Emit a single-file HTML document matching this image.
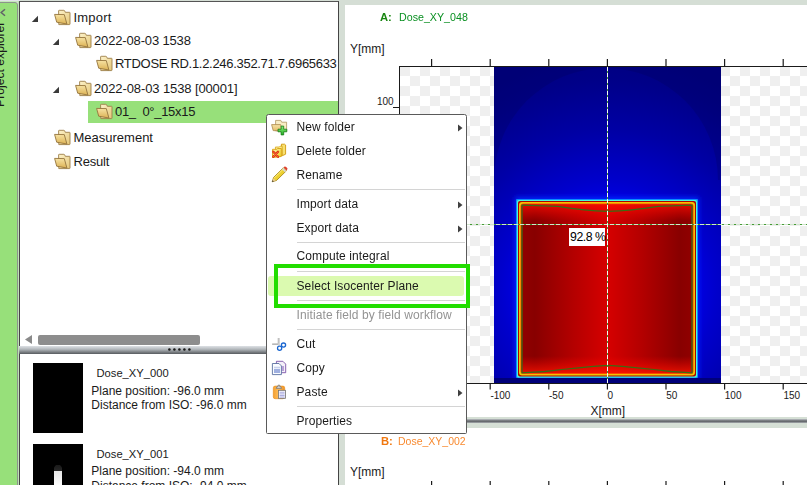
<!DOCTYPE html><html><head><meta charset="utf-8"><style>
*{margin:0;padding:0;box-sizing:border-box}
html,body{width:807px;height:485px;overflow:hidden;background:#d5ded5;font-family:"Liberation Sans", sans-serif}
.a{position:absolute}
.t{position:absolute;white-space:pre;font-family:"Liberation Sans", sans-serif}
.ic{position:absolute;overflow:visible}
</style></head><body>

<div class="a" style="left:0;top:0;width:20px;height:485px;background:#d5ded5"></div>
<div class="a" style="left:0;top:0;width:20px;height:1px;background:#e2e4ea"></div>
<div class="a" style="left:18px;top:1px;width:1px;height:484px;background:#bfe2b6"></div>
<div class="a" style="left:0;top:1px;width:18px;height:1px;background:#c6e6bd"></div>
<div class="a" style="left:-3px;top:2px;width:21px;height:490px;background:#97e07a;border:1px solid #8c948c;border-radius:3px"></div>
<svg class="ic" style="left:0px;top:8px" width="8" height="10" viewBox="0 0 8 10"><path d="M5,1.2 L1.2,4.5 L5,7.8" fill="none" stroke="#606068" stroke-width="1.5"/></svg>
<div class="t" style="left:0px;top:107.3px;font-size:12.2px;line-height:12.2px;color:#1a1a1a;transform-origin:0 0;transform:rotate(-90deg) translate(0,-5.75px)">Project explorer</div>
<div class="a" style="left:19px;top:1px;width:320px;height:346px;background:#fff;border-left:1px solid #444;border-top:1px solid #555;border-right:1px solid #444"></div>
<div class="a" style="left:88px;top:101px;width:250px;height:22px;background:#97e07a"></div>
<svg class="ic" style="left:31px;top:15px" width="8" height="8" viewBox="0 0 8 8"><path d="M7,0.8 L7,7 L0.8,7 z" fill="#3a3a3a"/></svg>

<svg class="ic" style="left:54px;top:10px" width="17" height="15" viewBox="0 0 17 15">
<defs><linearGradient id="fg54_10" x1="0" y1="0" x2="0" y2="1"><stop offset="0" stop-color="#f7e3a4"/><stop offset="1" stop-color="#dcb254"/></linearGradient>
<linearGradient id="fb54_10" x1="0" y1="0" x2="1" y2="1"><stop offset="0" stop-color="#fdf3cc"/><stop offset="1" stop-color="#e4c676"/></linearGradient></defs>
<path d="M4.6,0.7 Q4.6,0.3 5.2,0.3 h4.6 q0.6,0 0.9,0.6 l0.6,1.4 h4.2 q0.5,0 0.5,0.5 v11.2 q0,0.6 -0.6,0.6 h-10.6 z" fill="url(#fb54_10)" stroke="#9c7e48" stroke-width="0.9"/>
<path d="M0.6,4.4 L10.3,4.6 L12.9,14 L2.7,12.2 z" fill="url(#fg54_10)" stroke="#94743c" stroke-width="0.9"/>
</svg>

<div class="t" style="left:73.5px;top:11.00px;font-size:13px;line-height:13px;color:#1a1a1a;letter-spacing:0.20px;clip-path:inset(-10px 0 -10px -10px);width:264.5px">Import</div>

<svg class="ic" style="left:52px;top:38px" width="8" height="8" viewBox="0 0 8 8"><path d="M7,0.8 L7,7 L0.8,7 z" fill="#3a3a3a"/></svg>

<svg class="ic" style="left:75px;top:33px" width="17" height="15" viewBox="0 0 17 15">
<defs><linearGradient id="fg75_33" x1="0" y1="0" x2="0" y2="1"><stop offset="0" stop-color="#f7e3a4"/><stop offset="1" stop-color="#dcb254"/></linearGradient>
<linearGradient id="fb75_33" x1="0" y1="0" x2="1" y2="1"><stop offset="0" stop-color="#fdf3cc"/><stop offset="1" stop-color="#e4c676"/></linearGradient></defs>
<path d="M4.6,0.7 Q4.6,0.3 5.2,0.3 h4.6 q0.6,0 0.9,0.6 l0.6,1.4 h4.2 q0.5,0 0.5,0.5 v11.2 q0,0.6 -0.6,0.6 h-10.6 z" fill="url(#fb75_33)" stroke="#9c7e48" stroke-width="0.9"/>
<path d="M0.6,4.4 L10.3,4.6 L12.9,14 L2.7,12.2 z" fill="url(#fg75_33)" stroke="#94743c" stroke-width="0.9"/>
</svg>

<div class="t" style="left:94px;top:34.00px;font-size:13px;line-height:13px;color:#1a1a1a;letter-spacing:-0.15px;clip-path:inset(-10px 0 -10px -10px);width:244.0px">2022-08-03 1538</div>

<svg class="ic" style="left:96px;top:56px" width="17" height="15" viewBox="0 0 17 15">
<defs><linearGradient id="fg96_56" x1="0" y1="0" x2="0" y2="1"><stop offset="0" stop-color="#f7e3a4"/><stop offset="1" stop-color="#dcb254"/></linearGradient>
<linearGradient id="fb96_56" x1="0" y1="0" x2="1" y2="1"><stop offset="0" stop-color="#fdf3cc"/><stop offset="1" stop-color="#e4c676"/></linearGradient></defs>
<path d="M4.6,0.7 Q4.6,0.3 5.2,0.3 h4.6 q0.6,0 0.9,0.6 l0.6,1.4 h4.2 q0.5,0 0.5,0.5 v11.2 q0,0.6 -0.6,0.6 h-10.6 z" fill="url(#fb96_56)" stroke="#9c7e48" stroke-width="0.9"/>
<path d="M0.6,4.4 L10.3,4.6 L12.9,14 L2.7,12.2 z" fill="url(#fg96_56)" stroke="#94743c" stroke-width="0.9"/>
</svg>

<div class="t" style="left:115px;top:57.00px;font-size:13px;line-height:13px;color:#1a1a1a;letter-spacing:-0.30px;clip-path:inset(-10px 0 -10px -10px);width:223.0px">RTDOSE RD.1.2.246.352.71.7.6965633</div>

<svg class="ic" style="left:52px;top:86px" width="8" height="8" viewBox="0 0 8 8"><path d="M7,0.8 L7,7 L0.8,7 z" fill="#3a3a3a"/></svg>

<svg class="ic" style="left:75px;top:81px" width="17" height="15" viewBox="0 0 17 15">
<defs><linearGradient id="fg75_81" x1="0" y1="0" x2="0" y2="1"><stop offset="0" stop-color="#f7e3a4"/><stop offset="1" stop-color="#dcb254"/></linearGradient>
<linearGradient id="fb75_81" x1="0" y1="0" x2="1" y2="1"><stop offset="0" stop-color="#fdf3cc"/><stop offset="1" stop-color="#e4c676"/></linearGradient></defs>
<path d="M4.6,0.7 Q4.6,0.3 5.2,0.3 h4.6 q0.6,0 0.9,0.6 l0.6,1.4 h4.2 q0.5,0 0.5,0.5 v11.2 q0,0.6 -0.6,0.6 h-10.6 z" fill="url(#fb75_81)" stroke="#9c7e48" stroke-width="0.9"/>
<path d="M0.6,4.4 L10.3,4.6 L12.9,14 L2.7,12.2 z" fill="url(#fg75_81)" stroke="#94743c" stroke-width="0.9"/>
</svg>

<div class="t" style="left:94px;top:82.00px;font-size:13px;line-height:13px;color:#1a1a1a;letter-spacing:-0.11px;clip-path:inset(-10px 0 -10px -10px);width:244.0px">2022-08-03 1538 [00001]</div>

<svg class="ic" style="left:96px;top:104px" width="17" height="15" viewBox="0 0 17 15">
<defs><linearGradient id="fg96_104" x1="0" y1="0" x2="0" y2="1"><stop offset="0" stop-color="#f7e3a4"/><stop offset="1" stop-color="#dcb254"/></linearGradient>
<linearGradient id="fb96_104" x1="0" y1="0" x2="1" y2="1"><stop offset="0" stop-color="#fdf3cc"/><stop offset="1" stop-color="#e4c676"/></linearGradient></defs>
<path d="M4.6,0.7 Q4.6,0.3 5.2,0.3 h4.6 q0.6,0 0.9,0.6 l0.6,1.4 h4.2 q0.5,0 0.5,0.5 v11.2 q0,0.6 -0.6,0.6 h-10.6 z" fill="url(#fb96_104)" stroke="#9c7e48" stroke-width="0.9"/>
<path d="M0.6,4.4 L10.3,4.6 L12.9,14 L2.7,12.2 z" fill="url(#fg96_104)" stroke="#94743c" stroke-width="0.9"/>
</svg>

<div class="t" style="left:115px;top:105.00px;font-size:13px;line-height:13px;color:#1a1a1a;letter-spacing:-0.30px;clip-path:inset(-10px 0 -10px -10px);width:223.0px">01_  0°_15x15</div>

<svg class="ic" style="left:54px;top:130px" width="17" height="15" viewBox="0 0 17 15">
<defs><linearGradient id="fg54_130" x1="0" y1="0" x2="0" y2="1"><stop offset="0" stop-color="#f7e3a4"/><stop offset="1" stop-color="#dcb254"/></linearGradient>
<linearGradient id="fb54_130" x1="0" y1="0" x2="1" y2="1"><stop offset="0" stop-color="#fdf3cc"/><stop offset="1" stop-color="#e4c676"/></linearGradient></defs>
<path d="M4.6,0.7 Q4.6,0.3 5.2,0.3 h4.6 q0.6,0 0.9,0.6 l0.6,1.4 h4.2 q0.5,0 0.5,0.5 v11.2 q0,0.6 -0.6,0.6 h-10.6 z" fill="url(#fb54_130)" stroke="#9c7e48" stroke-width="0.9"/>
<path d="M0.6,4.4 L10.3,4.6 L12.9,14 L2.7,12.2 z" fill="url(#fg54_130)" stroke="#94743c" stroke-width="0.9"/>
</svg>

<div class="t" style="left:73.5px;top:131.00px;font-size:13px;line-height:13px;color:#1a1a1a;letter-spacing:0.00px;clip-path:inset(-10px 0 -10px -10px);width:264.5px">Measurement</div>

<svg class="ic" style="left:54px;top:154px" width="17" height="15" viewBox="0 0 17 15">
<defs><linearGradient id="fg54_154" x1="0" y1="0" x2="0" y2="1"><stop offset="0" stop-color="#f7e3a4"/><stop offset="1" stop-color="#dcb254"/></linearGradient>
<linearGradient id="fb54_154" x1="0" y1="0" x2="1" y2="1"><stop offset="0" stop-color="#fdf3cc"/><stop offset="1" stop-color="#e4c676"/></linearGradient></defs>
<path d="M4.6,0.7 Q4.6,0.3 5.2,0.3 h4.6 q0.6,0 0.9,0.6 l0.6,1.4 h4.2 q0.5,0 0.5,0.5 v11.2 q0,0.6 -0.6,0.6 h-10.6 z" fill="url(#fb54_154)" stroke="#9c7e48" stroke-width="0.9"/>
<path d="M0.6,4.4 L10.3,4.6 L12.9,14 L2.7,12.2 z" fill="url(#fg54_154)" stroke="#94743c" stroke-width="0.9"/>
</svg>

<div class="t" style="left:73.5px;top:155.00px;font-size:13px;line-height:13px;color:#1a1a1a;letter-spacing:-0.20px;clip-path:inset(-10px 0 -10px -10px);width:264.5px">Result</div>

<svg class="ic" style="left:25px;top:335px" width="8" height="9" viewBox="0 0 8 9"><path d="M7,0 L7,9 L0,4.5 z" fill="#8a8a8a"/></svg>
<div class="a" style="left:38px;top:335px;width:162px;height:10px;background:#8d8d8d;border-radius:2px"></div>
<div class="a" style="left:19px;top:346px;width:320px;height:8px;background:linear-gradient(#dde1e5,#b4b9bd 40%,#565a5e)"></div>
<svg class="ic" style="left:0;top:0" width="807" height="485"><circle cx="169.4" cy="349.5" r="1.25" fill="#1a1a1a"/><circle cx="174.4" cy="349.5" r="1.25" fill="#1a1a1a"/><circle cx="179.4" cy="349.5" r="1.25" fill="#1a1a1a"/><circle cx="184.4" cy="349.5" r="1.25" fill="#1a1a1a"/><circle cx="189.4" cy="349.5" r="1.25" fill="#1a1a1a"/></svg>
<div class="a" style="left:19px;top:354px;width:320px;height:131px;background:#fff;border-left:1px solid #444;border-right:1px solid #444"></div>
<div class="a" style="left:33px;top:363px;width:50px;height:70px;background:#000"></div>
<div class="a" style="left:33px;top:444px;width:50px;height:41px;background:#000"></div>
<div class="a" style="left:54px;top:465px;width:8px;height:20px;background:linear-gradient(#1a1a1a,#262626 5.5px,#e6e6e6 6px,#fcfcfc);clip-path:polygon(2px 0,6px 0,8px 2.5px,8px 100%,0 100%,0 2.5px)"></div>
<div class="t" style="left:96.5px;top:367.52px;font-size:11.2px;line-height:11.2px;color:#1a1a1a;">Dose_XY_000</div>

<div class="t" style="left:91.3px;top:384.84px;font-size:12px;line-height:12px;color:#1a1a1a;">Plane position: -96.0 mm</div>

<div class="t" style="left:91.3px;top:399.14px;font-size:12px;line-height:12px;color:#1a1a1a;">Distance from ISO: -96.0 mm</div>

<div class="t" style="left:96.5px;top:448.52px;font-size:11.2px;line-height:11.2px;color:#1a1a1a;">Dose_XY_001</div>

<div class="t" style="left:91.3px;top:465.34px;font-size:12px;line-height:12px;color:#1a1a1a;">Plane position: -94.0 mm</div>

<div class="t" style="left:91.3px;top:479.64px;font-size:12px;line-height:12px;color:#1a1a1a;">Distance from ISO: -94.0 mm</div>

<div class="a" style="left:345px;top:5px;width:462px;height:412px;background:#fff"></div>
<div class="a" style="left:345px;top:417px;width:462px;height:11px;background:#d5dfd5"></div>
<div class="a" style="left:345px;top:419px;width:462px;height:4px;background:linear-gradient(#c0c4c8,#5a5e62 55%,#a8acb0)"></div>
<div class="a" style="left:345px;top:428px;width:462px;height:57px;background:#fff"></div>
<div class="t" style="left:380px;top:12.01px;font-size:11.8px;line-height:11.8px;color:#1a8612;transform:scaleX(0.95);transform-origin:0 0"><b>A:</b></div>

<div class="t" style="left:398.8px;top:12.01px;font-size:11.8px;line-height:11.8px;color:#0a9022;transform:scaleX(0.905);transform-origin:0 0">Dose_XY_048</div>

<div class="t" style="left:350px;top:43.04px;font-size:12px;line-height:12px;color:#1a1a1a;">Y[mm]</div>

<div class="t" style="left:377px;top:96.53px;font-size:10px;line-height:10px;color:#1a1a1a;">100</div>

<div class="t" style="left:380.6px;top:435.51px;font-size:11.8px;line-height:11.8px;color:#f07810;transform:scaleX(0.95);transform-origin:0 0"><b>B:</b></div>

<div class="t" style="left:397.8px;top:435.51px;font-size:11.8px;line-height:11.8px;color:#f88a30;transform:scaleX(0.89);transform-origin:0 0">Dose_XY_002</div>

<div class="t" style="left:350px;top:466.24px;font-size:12px;line-height:12px;color:#1a1a1a;">Y[mm]</div>

<svg class="a" style="left:0;top:0" width="807" height="485" viewBox="0 0 807 485">
<defs>
<pattern id="chk" x="400" y="66" width="20" height="20" patternUnits="userSpaceOnUse">
<rect width="20" height="20" fill="#fff"/><rect width="10" height="10" fill="#efefef"/><rect x="10" y="10" width="10" height="10" fill="#efefef"/></pattern>
<radialGradient id="bl" cx="608" cy="289" r="235" gradientUnits="userSpaceOnUse">
<stop offset="0" stop-color="#0000f0"/><stop offset="0.38" stop-color="#0000e0"/><stop offset="0.46" stop-color="#0000cc"/><stop offset="0.68" stop-color="#0000a4"/><stop offset="0.89" stop-color="#000088"/><stop offset="1" stop-color="#000080"/></radialGradient>
<linearGradient id="rv" x1="0" y1="204" x2="0" y2="373" gradientUnits="userSpaceOnUse">
<stop offset="0" stop-color="#ff1000" stop-opacity="0.75"/><stop offset="0.1" stop-color="#ff0000" stop-opacity="0"/><stop offset="0.9" stop-color="#ff0000" stop-opacity="0"/><stop offset="1" stop-color="#ff1800" stop-opacity="0.75"/></linearGradient>
<linearGradient id="rd" x1="523" y1="0" x2="692" y2="0" gradientUnits="userSpaceOnUse">
<stop offset="0" stop-color="#900000"/><stop offset="0.07" stop-color="#880000"/><stop offset="0.3" stop-color="#b40000"/><stop offset="0.5" stop-color="#d60000"/><stop offset="0.7" stop-color="#b40000"/><stop offset="0.93" stop-color="#880000"/><stop offset="1" stop-color="#900000"/></linearGradient>
</defs>
<rect x="400" y="66" width="407" height="317" fill="url(#chk)"/>
<rect x="494" y="66" width="227" height="317" fill="url(#bl)"/>
<clipPath id="bc"><rect x="494" y="66" width="227" height="114"/></clipPath>
<path d="M494,66 H721 V180 H494 z M494,180 A112,112 0 0 1 718,180 z" fill="#000050" fill-opacity="0.22" fill-rule="evenodd" clip-path="url(#bc)"/>
<rect x="494" y="378" width="227" height="5" fill="#00007a"/>
<filter id="gf" x="-20%" y="-20%" width="140%" height="140%"><feGaussianBlur stdDeviation="2.5"/></filter>
<clipPath id="bcl"><rect x="494" y="66" width="227" height="312"/></clipPath>
<g clip-path="url(#bcl)"><rect x="515" y="197" width="184" height="182" rx="1" fill="#0028ff" fill-opacity="0.85" filter="url(#gf)"/></g>
<rect x="516" y="199" width="182" height="179" rx="1" fill="#0a8cff"/>
<rect x="517" y="200" width="180" height="177.5" rx="1.5" fill="#48f8d8"/>
<rect x="518" y="201" width="178" height="175.5" rx="2" fill="#b00000"/>
<rect x="519" y="202" width="176" height="173.5" rx="3" fill="#f0c400"/>
<rect x="520.5" y="203.5" width="173" height="170.5" rx="3" fill="#ff4800"/>
<rect x="521.5" y="204.5" width="171" height="168.5" rx="2" fill="url(#rd)"/>
<rect x="521.5" y="204.5" width="171" height="168.5" rx="2" fill="url(#rv)"/>
<path d="M522,205.2 L558,206.3 Q585,210.8 608,211.3 Q631,210.8 658,206.3 L692,205.2 V372.8 L671,371.5 Q636,367 608,365.3 Q580,367 545,371.5 L522,372.8 z" fill="none" stroke="#3a6c12" stroke-width="1.3"/>
<path d="M400,383.5 H807 M399.5,66 V383.5 M400,66.5 H807" stroke="#1a1a1a" stroke-width="1" fill="none"/>
<path d="M431.6,59 V66 M431.6,383 V389.5" stroke="#1a1a1a" stroke-width="1.2"/>
<path d="M490.2,59 V66 M490.2,383 V389.5" stroke="#1a1a1a" stroke-width="1.2"/>
<path d="M548.8,59 V66 M548.8,383 V389.5" stroke="#1a1a1a" stroke-width="1.2"/>
<path d="M607.4,59 V66 M607.4,383 V389.5" stroke="#1a1a1a" stroke-width="1.2"/>
<path d="M666.0,59 V66 M666.0,383 V389.5" stroke="#1a1a1a" stroke-width="1.2"/>
<path d="M724.6,59 V66 M724.6,383 V389.5" stroke="#1a1a1a" stroke-width="1.2"/>
<path d="M783.2,59 V66 M783.2,383 V389.5" stroke="#1a1a1a" stroke-width="1.2"/>
<path d="M393,107.5 H400" stroke="#1a1a1a" stroke-width="1"/>
<path d="M607.5,67 V383 M400,224.5 H807" stroke="#459a35" stroke-width="1"/>
<path d="M607.5,67 V383" stroke="#ffffff" stroke-width="1" stroke-dasharray="4,2" stroke-opacity="0.95"/>
<path d="M400,224.5 H807" stroke="#ffffff" stroke-width="1" stroke-dasharray="4,2" stroke-opacity="0.75"/>
<path d="M431.6,481 V488" stroke="#1a1a1a" stroke-width="1.2"/>
<path d="M490.2,481 V488" stroke="#1a1a1a" stroke-width="1.2"/>
<path d="M548.8,481 V488" stroke="#1a1a1a" stroke-width="1.2"/>
<path d="M607.4,481 V488" stroke="#1a1a1a" stroke-width="1.2"/>
<path d="M666.0,481 V488" stroke="#1a1a1a" stroke-width="1.2"/>
<path d="M724.6,481 V488" stroke="#1a1a1a" stroke-width="1.2"/>
<path d="M783.2,481 V488" stroke="#1a1a1a" stroke-width="1.2"/>
</svg>
<div class="t" style="left:490.4px;top:390.74px;font-size:10px;line-height:10px;color:#1a1a1a;">-100</div>

<div class="t" style="left:549.0px;top:390.74px;font-size:10px;line-height:10px;color:#1a1a1a;">-50</div>

<div class="t" style="left:607.6px;top:390.74px;font-size:10px;line-height:10px;color:#1a1a1a;">0</div>

<div class="t" style="left:666.2px;top:390.74px;font-size:10px;line-height:10px;color:#1a1a1a;">50</div>

<div class="t" style="left:724.8px;top:390.74px;font-size:10px;line-height:10px;color:#1a1a1a;">100</div>

<div class="t" style="left:783.4px;top:390.74px;font-size:10px;line-height:10px;color:#1a1a1a;">150</div>

<div class="t" style="left:590.5px;top:404.54px;font-size:12px;line-height:12px;color:#1a1a1a;">X[mm]</div>

<div class="a" style="left:569px;top:228px;width:36px;height:18px;background:#fff"></div>
<div class="t" style="left:570px;top:230.59px;font-size:12.3px;line-height:12.3px;color:#000;letter-spacing:-0.45px">92.8 %</div>

<div class="a" style="left:0;top:0;width:807px;height:485px;will-change:transform"><div class="a" style="left:266px;top:114px;width:201px;height:320px;background:#fff;border:1px solid #5a5a5a;border-radius:2.5px 2.5px 1.5px 1.5px"></div>
<div class="t" style="left:296.5px;top:120.84px;font-size:12px;line-height:12px;color:#1a1a1a;letter-spacing:0.1px">New folder</div>

<svg class="ic" style="left:269px;top:117px" width="20" height="20" viewBox="0 0 20 20"><defs><linearGradient id="nfg" x1="0" y1="0" x2="0" y2="1"><stop offset="0" stop-color="#f7e3a6"/><stop offset="1" stop-color="#e2bb66"/></linearGradient>
<linearGradient id="plg" x1="0" y1="0" x2="0" y2="1"><stop offset="0" stop-color="#8cf07c"/><stop offset="1" stop-color="#22b022"/></linearGradient></defs>
<path d="M6.6,3.4 h5.2 l0.9,1.8 h4.9 v8.6 h-11 z" fill="#f8edc4" stroke="#b09560" stroke-width="0.8"/>
<path d="M2.6,7.6 L11.6,7.6 L13.2,14 L4.2,13.6 z" fill="url(#nfg)" stroke="#a9874a" stroke-width="0.8"/>
<path d="M12.1,9.1 h2.6 v3.1 h3.1 v2.6 h-3.1 v3.1 h-2.6 v-3.1 h-3.1 v-2.6 h3.1 z" fill="url(#plg)" stroke="#157a15" stroke-width="0.8"/></svg>

<svg class="ic" style="left:458px;top:124px" width="5" height="8" viewBox="0 0 5 8"><path d="M0,0.5 L4.5,4 L0,7.5 z" fill="#404040"/></svg>
<div class="t" style="left:296.5px;top:144.84px;font-size:12px;line-height:12px;color:#1a1a1a;letter-spacing:0.1px">Delete folder</div>

<svg class="ic" style="left:269px;top:141px" width="20" height="20" viewBox="0 0 20 20"><defs><linearGradient id="dfg" x1="0" y1="0" x2="1" y2="1"><stop offset="0" stop-color="#fff6b0"/><stop offset="1" stop-color="#f0d020"/></linearGradient></defs>
<path d="M12.4,3.2 h3.2 l1,0.8 v9.2 l-3.5,1.6 z" fill="#f8e070" stroke="#d09a10" stroke-width="0.9"/>
<path d="M6.4,6.0 h3.8 l0.8,-0.8 h2.2 v9.2 l-6.5,1.6 z" fill="#fae890" stroke="#d8a818" stroke-width="0.8"/>
<path d="M3.5,8.3 h4.2 l1,-0.8 h3.6 v8.0 l-8.8,0.9 z" fill="url(#dfg)" stroke="#d8a010" stroke-width="0.9"/>
<path d="M4.3,10.8 L9,15.8 M9,10.8 L4.3,15.8" stroke="#d83010" stroke-width="2.4" stroke-linecap="round"/>
<path d="M4.3,10.8 L9,15.8 M9,10.8 L4.3,15.8" stroke="#ff6a3a" stroke-width="1" stroke-linecap="round"/></svg>

<div class="t" style="left:296.5px;top:168.84px;font-size:12px;line-height:12px;color:#1a1a1a;letter-spacing:0.1px">Rename</div>

<svg class="ic" style="left:269px;top:165px" width="20" height="20" viewBox="0 0 20 20"><path d="M3.2,16.8 L4.6,12.4 L14.4,2.8 L17.4,5.8 L7.6,15.4 z" fill="#ecd030" stroke="#a08010" stroke-width="0.8"/>
<path d="M5.2,13.0 L15.0,3.4" stroke="#fff080" stroke-width="1"/>
<path d="M13.6,3.6 L16.6,6.6" stroke="#d8d8d8" stroke-width="1.6"/>
<path d="M14.6,2.4 L15.6,1.6 Q17.4,1.4 18.2,3.2 Q18.6,4.4 17.6,5.4 z" fill="#e04030"/>
<path d="M3.2,16.8 L4.4,13.2 L6.8,15.6 z" fill="#e8c890"/>
<path d="M2.9,17.1 L3.6,15.2 L4.8,16.4 z" fill="#404040"/></svg>

<div class="a" style="left:297px;top:189px;width:168px;height:1px;background:#d4d4d4"></div>
<div class="t" style="left:296.5px;top:197.84px;font-size:12px;line-height:12px;color:#1a1a1a;letter-spacing:0.1px">Import data</div>

<svg class="ic" style="left:458px;top:201px" width="5" height="8" viewBox="0 0 5 8"><path d="M0,0.5 L4.5,4 L0,7.5 z" fill="#404040"/></svg>
<div class="t" style="left:296.5px;top:221.84px;font-size:12px;line-height:12px;color:#1a1a1a;letter-spacing:0.1px">Export data</div>

<svg class="ic" style="left:458px;top:225px" width="5" height="8" viewBox="0 0 5 8"><path d="M0,0.5 L4.5,4 L0,7.5 z" fill="#404040"/></svg>
<div class="a" style="left:297px;top:242px;width:168px;height:1px;background:#d4d4d4"></div>
<div class="t" style="left:296.5px;top:250.34px;font-size:12px;line-height:12px;color:#1a1a1a;letter-spacing:0.1px">Compute integral</div>

<div class="a" style="left:297px;top:271px;width:168px;height:1px;background:#d4d4d4"></div>
<div class="a" style="left:268px;top:275.5px;width:196px;height:20.5px;background:#dbfab0;border-radius:3px"></div>
<div class="t" style="left:296.5px;top:279.64px;font-size:12px;line-height:12px;color:#1a1a1a;letter-spacing:0.1px">Select Isocenter Plane</div>

<div class="a" style="left:297px;top:300px;width:168px;height:1px;background:#d4d4d4"></div>
<div class="t" style="left:296.5px;top:308.84px;font-size:12px;line-height:12px;color:#939393;letter-spacing:0.1px">Initiate field by field workflow</div>

<div class="a" style="left:297px;top:329px;width:168px;height:1px;background:#d4d4d4"></div>
<div class="t" style="left:296.5px;top:337.84px;font-size:12px;line-height:12px;color:#1a1a1a;letter-spacing:0.1px">Cut</div>

<svg class="ic" style="left:269px;top:335px" width="20" height="20" viewBox="0 0 20 20"><path d="M9.6,3 V10.2 M3.2,9.2 H10" stroke="#9a9a9a" stroke-width="1.6" fill="none"/>
<path d="M9.6,3 V10.2 M3.2,9.2 H10" stroke="#f0f0f0" stroke-width="0.5" fill="none"/>
<circle cx="10.6" cy="13.2" r="2.1" fill="none" stroke="#1a66d0" stroke-width="1.3"/>
<circle cx="14.5" cy="10.1" r="2.1" fill="none" stroke="#1a66d0" stroke-width="1.3"/></svg>

<div class="t" style="left:296.5px;top:362.24px;font-size:12px;line-height:12px;color:#1a1a1a;letter-spacing:0.1px">Copy</div>

<svg class="ic" style="left:269px;top:357px" width="20" height="20" viewBox="0 0 20 20"><path d="M7.4,4.3 h6.5 l2.8,2.8 v8.6 h-9.3 z" fill="#f4f0f8" stroke="#7a54a8" stroke-width="0.9"/>
<rect x="12.4" y="9" width="2.6" height="5" fill="#b8a0d8"/>
<path d="M3.4,6.5 h6.6 l2.4,2.4 v8.7 h-9 z" fill="#fafcff" stroke="#5a70a0" stroke-width="0.9"/>
<rect x="5" y="11.8" width="6" height="4.2" fill="#a0b0e0"/>
<path d="M5,10.3 h6" stroke="#a0b0e0" stroke-width="0.7"/></svg>

<div class="t" style="left:296.5px;top:385.84px;font-size:12px;line-height:12px;color:#1a1a1a;letter-spacing:0.1px">Paste</div>

<svg class="ic" style="left:269px;top:382px" width="20" height="20" viewBox="0 0 20 20"><defs><linearGradient id="pg" x1="0" y1="0" x2="1" y2="0"><stop offset="0" stop-color="#f4a030"/><stop offset="0.5" stop-color="#ffc060"/><stop offset="1" stop-color="#f09020"/></linearGradient></defs>
<rect x="4.3" y="4.1" width="11.4" height="12.6" rx="1.8" fill="url(#pg)" stroke="#e88a10" stroke-width="0.6"/>
<path d="M7.2,6.4 h5.4 l-0.6,-1.6 h-1.2 v-1.6 h-1.8 v1.6 h-1.2 z" fill="#d8d8d8" stroke="#707070" stroke-width="0.7"/>
<rect x="9.4" y="8.3" width="7.2" height="8" fill="#f8f8ff" stroke="#707070" stroke-width="0.8"/>
<path d="M10.6,10.3 h5 M10.6,11.9 h5 M10.6,13.5 h5 M10.6,15 h5" stroke="#9a9ad8" stroke-width="0.8"/></svg>

<svg class="ic" style="left:458px;top:389px" width="5" height="8" viewBox="0 0 5 8"><path d="M0,0.5 L4.5,4 L0,7.5 z" fill="#404040"/></svg>
<div class="a" style="left:297px;top:406px;width:168px;height:1px;background:#d4d4d4"></div>
<div class="t" style="left:296.5px;top:415.34px;font-size:12px;line-height:12px;color:#1a1a1a;letter-spacing:0.1px">Properties</div>
</div>
<div class="a" style="left:274px;top:264px;width:195.5px;height:44px;border:4px solid #22dd00"></div>
</body></html>
